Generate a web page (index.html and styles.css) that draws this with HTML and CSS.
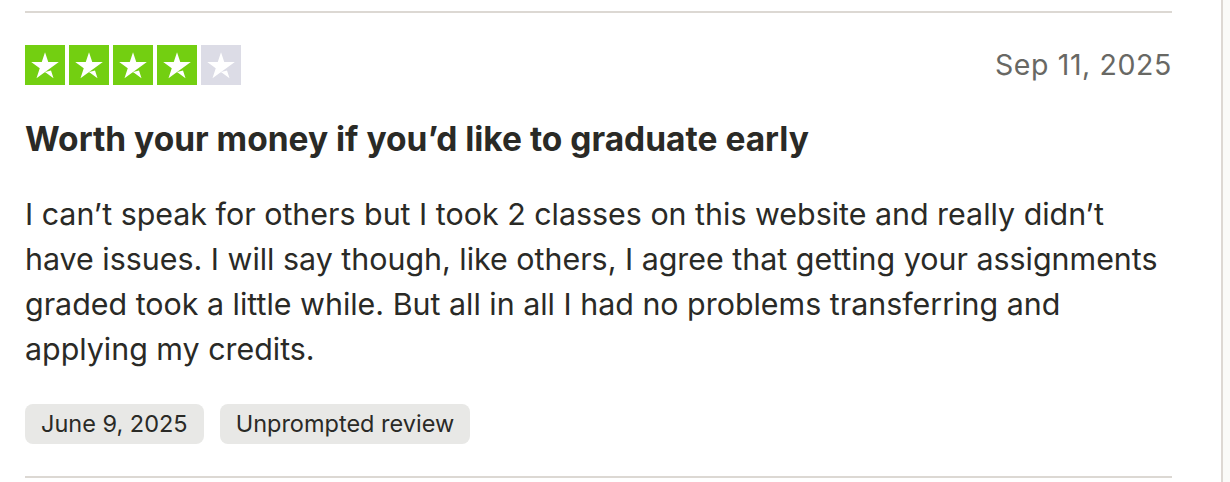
FILE: index.html
```html
<!DOCTYPE html>
<html lang="en">
<head>
<meta charset="utf-8">
<title>Review</title>
<link rel="stylesheet" href="styles.css">
</head>
<body>
<div class="page">
  <article class="review">
    <div class="head">
      <div class="stars" aria-label="Rated 4 out of 5">
        <span class="star on"><svg viewBox="0 0 96 96"><path d="M48.03 65.03L62.43 61.38L68.45 79.92ZM81.17 41.06H55.82L48.03 17.19L40.24 41.06L14.89 40.97L35.39 55.77L27.6 79.63L48.1 64.83L60.71 55.77Z"/></svg></span>
        <span class="star on"><svg viewBox="0 0 96 96"><path d="M48.03 65.03L62.43 61.38L68.45 79.92ZM81.17 41.06H55.82L48.03 17.19L40.24 41.06L14.89 40.97L35.39 55.77L27.6 79.63L48.1 64.83L60.71 55.77Z"/></svg></span>
        <span class="star on"><svg viewBox="0 0 96 96"><path d="M48.03 65.03L62.43 61.38L68.45 79.92ZM81.17 41.06H55.82L48.03 17.19L40.24 41.06L14.89 40.97L35.39 55.77L27.6 79.63L48.1 64.83L60.71 55.77Z"/></svg></span>
        <span class="star on"><svg viewBox="0 0 96 96"><path d="M48.03 65.03L62.43 61.38L68.45 79.92ZM81.17 41.06H55.82L48.03 17.19L40.24 41.06L14.89 40.97L35.39 55.77L27.6 79.63L48.1 64.83L60.71 55.77Z"/></svg></span>
        <span class="star off"><svg viewBox="0 0 96 96"><path d="M48.03 65.03L62.43 61.38L68.45 79.92ZM81.17 41.06H55.82L48.03 17.19L40.24 41.06L14.89 40.97L35.39 55.77L27.6 79.63L48.1 64.83L60.71 55.77Z"/></svg></span>
      </div>
      <time class="date">Sep 11, 2025</time>
    </div>
    <h2 class="title">Worth your money if you’d like to graduate early</h2>
    <p class="text">I can’t speak for others but I took 2 classes on this website and really didn’t have issues. I will say though, like others, I agree that getting your assignments graded took a little while. But all in all I had no problems transferring and applying my credits.</p>
    <div class="tags">
      <span class="tag">June 9, 2025</span>
      <span class="tag">Unprompted review</span>
    </div>
  </article>
</div>
</body>
</html>
```
FILE: styles.css
```css
html, body {
  margin: 0;
  padding: 0;
}
body {
  background: #fafaf8;
  font-family: Inter, "Noto Sans", sans-serif;
  color: #2a2a26;
}
.page {
  width: 1221px;
  min-height: 471px;
  background: #ffffff;
  border-right: 2px solid #ddd8d3;
  padding-top: 11px;
}
.review {
  margin-left: 25px;
  width: 1147px;
  border-top: 2px solid #dcd8d3;
  border-bottom: 2px solid #dcd8d3;
  padding-top: 32px;
  padding-bottom: 32px;
}
.head {
  display: flex;
  justify-content: space-between;
  align-items: center;
}
.stars {
  display: flex;
  gap: 4px;
}
.star {
  width: 40px;
  height: 40px;
  display: block;
}
.star svg {
  display: block;
  width: 40px;
  height: 40px;
  fill: #ffffff;
}
.star.on { background: #73cf11; }
.star.off { background: #dcdce6; }
.date {
  font-size: 28.5px;
  letter-spacing: 0.6px;
  color: #686864;
  line-height: 40px;
}
.title {
  margin: 34px 0 0;
  font-size: 33.5px;
  line-height: 40px;
  font-weight: 700;
}
.text {
  margin: 33px 0 0;
  font-size: 30.4px;
  line-height: 45px;
}
.tags {
  display: flex;
  gap: 16px;
  margin-top: 32px;
}
.tag {
  background: #e8e8e6;
  border-radius: 8px;
  height: 40px;
  line-height: 40px;
  padding: 0 16px;
  font-size: 23.5px;
}
```
